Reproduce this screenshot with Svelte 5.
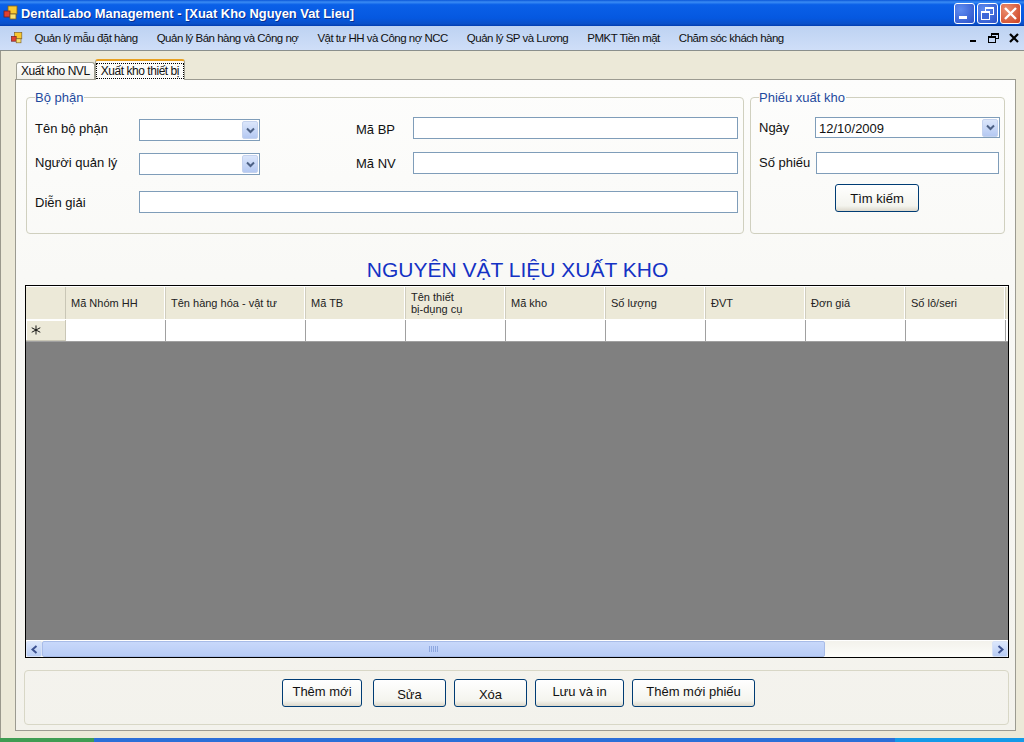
<script>
  const menus = [
    'Quản lý mẫu đặt hàng',
    'Quản lý Bán hàng và Công nợ',
    'Vật tư HH và Công nợ NCC',
    'Quản lý SP và Lương',
    'PMKT Tiền mặt',
    'Chăm sóc khách hàng'
  ];

  const columns = [
    { label: 'Mã Nhóm HH', width: 100 },
    { label: 'Tên hàng hóa - vật tư', width: 140 },
    { label: 'Mã TB', width: 100 },
    { label: 'Tên thiết\nbị-dụng cụ', width: 100 },
    { label: 'Mã kho', width: 100 },
    { label: 'Số lượng', width: 100 },
    { label: 'ĐVT', width: 100 },
    { label: 'Đơn giá', width: 100 },
    { label: 'Số lô/seri', width: 100 }
  ];

  const buttons = [
    { label: 'Thêm mới', width: 80, cls: 'up' },
    { label: 'Sửa', width: 73, cls: 'down' },
    { label: 'Xóa', width: 73, cls: 'down' },
    { label: 'Lưu và in', width: 89, cls: 'up' },
    { label: 'Thêm mới phiếu', width: 123, cls: 'up' }
  ];
</script>

{#snippet arrow()}
  <span class="drop">
    <svg width="9" height="7" viewBox="0 0 9 7"><path d="M1 1.5 L4.5 5 L8 1.5" fill="none" stroke="#4d6185" stroke-width="2"/></svg>
  </span>
{/snippet}

{#snippet logo()}
  <svg width="16" height="16" viewBox="0 0 16 16">
    <rect x="5" y="1" width="9" height="8" fill="#f8c830" stroke="#806020" stroke-width="0.8"/>
    <rect x="1" y="6" width="6" height="6" fill="#e04030" stroke="#702020" stroke-width="0.8"/>
    <rect x="7" y="9" width="6" height="5" fill="#f8e070" stroke="#806020" stroke-width="0.8"/>
  </svg>
{/snippet}

<div class="window">
  <header class="titlebar">
    <span class="app-icon">{@render logo()}</span>
    <span class="title">DentalLabo Management - [Xuat Kho Nguyen Vat Lieu]</span>
    <div class="caption">
      <span class="cap blue">
        <svg width="21" height="21" viewBox="0 0 21 21"><rect x="5" y="13" width="8" height="3" fill="#fff"/></svg>
      </span>
      <span class="cap blue">
        <svg width="21" height="21" viewBox="0 0 21 21" fill="none" stroke="#fff"><rect x="8.5" y="4.5" width="8" height="7" stroke-width="1"/><path d="M8 5h9" stroke-width="2"/><rect x="4.5" y="8.5" width="8" height="8" fill="#3f68d8" stroke-width="1"/><path d="M4 9h9" stroke-width="2"/></svg>
      </span>
      <span class="cap red">
        <svg width="21" height="21" viewBox="0 0 21 21"><path d="M5 5 L16 16 M16 5 L5 16" stroke="#fff" stroke-width="2.4"/></svg>
      </span>
    </div>
  </header>

  <nav class="menubar">
    <span class="menu-icon">{@render logo()}</span>
    {#each menus as m}
      <span class="menu-item">{m}</span>
    {/each}
    <div class="mdi">
      <svg width="12" height="12" viewBox="0 0 12 12"><rect x="2" y="8" width="6" height="2" fill="#000"/></svg>
      <svg width="12" height="12" viewBox="0 0 12 12" fill="none" stroke="#000"><rect x="3.5" y="1.5" width="7" height="5"/><path d="M3 2h8" stroke-width="2"/><rect x="0.5" y="4.5" width="7" height="6" fill="#c6d8f6"/><path d="M0 5h8" stroke-width="2"/></svg>
      <svg width="12" height="12" viewBox="0 0 12 12"><path d="M2 2 L10 10 M10 2 L2 10" stroke="#000" stroke-width="2.2"/></svg>
    </div>
  </nav>

  <main class="client">
    <div class="tabs">
      <span class="tab">Xuất kho NVL</span>
      <span class="tab active"><span class="focus">Xuất kho thiết bị</span></span>
    </div>

    <section class="page">
      <div class="top-groups">
        <fieldset class="group dept">
          <legend>Bộ phận</legend>
          <div class="row first">
            <span class="lbl">Tên bộ phận</span>
            <div class="combo small">{@render arrow()}</div>
            <span class="lbl code">Mã BP</span>
            <div class="input wide raised"></div>
          </div>
          <div class="row second">
            <span class="lbl">Người quản lý</span>
            <div class="combo small">{@render arrow()}</div>
            <span class="lbl code">Mã NV</span>
            <div class="input wide nudged"></div>
          </div>
          <div class="row third">
            <span class="lbl level">Diễn giải</span>
            <div class="input full"></div>
          </div>
        </fieldset>

        <fieldset class="group ticket">
          <legend>Phiếu xuất kho</legend>
          <div class="row ticket-first">
            <span class="lbl short level">Ngày</span>
            <div class="combo date"><span>12/10/2009</span>{@render arrow()}</div>
          </div>
          <div class="row ticket-second">
            <span class="lbl short nudge">Số phiếu</span>
            <div class="input ticket-no"></div>
          </div>
          <div class="search-row">
            <button class="btn search">Tìm kiếm</button>
          </div>
        </fieldset>
      </div>

      <h1 class="heading">NGUYÊN VẬT LIỆU XUẤT KHO</h1>

      <div class="grid">
        <div class="grid-head">
          <div class="corner"></div>
          {#each columns as c}
            <div class="col-head" style="width: {c.width}px">{c.label}</div>
          {/each}
        </div>
        <div class="grid-row">
          <div class="row-head">
            <svg width="10" height="10" viewBox="0 0 11 11"><path d="M5.5 0.5v10M0.8 3l9.4 5M0.8 8l9.4-5" stroke="#000" stroke-width="1"/></svg>
          </div>
          {#each columns as c}
            <div class="cell" style="width: {c.width}px"></div>
          {/each}
        </div>
        <div class="grid-empty"></div>
        <div class="scrollbar">
          <span class="sb-btn">
            <svg width="9" height="9" viewBox="0 0 9 9"><path d="M6.5 1 L2.5 4.5 L6.5 8" fill="none" stroke="#3d5290" stroke-width="2"/></svg>
          </span>
          <div class="sb-thumb">
            <svg width="9" height="6" viewBox="0 0 9 6"><path d="M0.5 0v6M2.5 0v6M4.5 0v6M6.5 0v6M8.5 0v6" stroke="#8ea8e0" stroke-width="1"/></svg>
          </div>
          <div class="sb-track"></div>
          <span class="sb-btn">
            <svg width="9" height="9" viewBox="0 0 9 9"><path d="M2.5 1 L6.5 4.5 L2.5 8" fill="none" stroke="#3d5290" stroke-width="2"/></svg>
          </span>
        </div>
      </div>

      <div class="actions">
        {#each buttons as b}
          <button class="btn {b.cls}" style="width: {b.width}px">{b.label}</button>
        {/each}
      </div>
    </section>
  </main>

  <footer class="taskbar">
    <span class="start"></span>
    <span class="bar"></span>
    <span class="tray"></span>
  </footer>
</div>

<style>
  :global(body) {
    margin: 0;
    background: #ece9d8;
  }

  .window {
    width: 1024px;
    height: 742px;
    display: flex;
    flex-direction: column;
    overflow: hidden;
    font-family: "Liberation Sans", Arial, sans-serif;
    font-size: 13px;
    color: #111;
  }

  .titlebar {
    height: 26px;
    flex: none;
    display: flex;
    align-items: center;
    padding: 0 3px;
    box-sizing: border-box;
    background: linear-gradient(180deg, #0a56d8 0%, #3a8cf4 8%, #0a60e8 18%, #0558e0 70%, #0a50c8 92%, #003cb0 100%);
  }

  .app-icon {
    display: flex;
    width: 18px;
  }

  .title {
    color: #fff;
    font-weight: bold;
    font-size: 12.9px;
    text-shadow: 1px 1px 0 #0a3090;
  }

  .caption {
    margin-left: auto;
    display: flex;
    gap: 2px;
  }

  .cap {
    width: 21px;
    height: 21px;
    box-sizing: border-box;
    border: 1px solid #fff;
    border-radius: 3px;
    display: block;
    overflow: hidden;
  }

  .cap svg {
    display: block;
    margin: -1px;
  }

  .cap.blue {
    background: radial-gradient(circle at 30% 30%, #5f8cf0, #2a50c8);
  }

  .cap.red {
    background: radial-gradient(circle at 30% 30%, #ec9070, #cc4020);
  }

  .menubar {
    height: 25px;
    flex: none;
    display: flex;
    align-items: center;
    padding: 0 3px 0 9px;
    box-sizing: border-box;
    background: linear-gradient(180deg, #bdd2f2, #cfdef8);
    border-bottom: 1px solid #8a8f8c;
    font-size: 11.5px;
    letter-spacing: -0.5px;
  }

  .menu-icon {
    display: flex;
    width: 16px;
    transform: scale(0.8);
  }

  .menu-item {
    padding: 0 9.5px;
    white-space: nowrap;
  }

  .mdi {
    margin-left: auto;
    display: flex;
    gap: 8px;
    padding-right: 1px;
  }

  .client {
    flex: 1;
    min-height: 0;
    display: flex;
    flex-direction: column;
    padding: 9px 8px 7px 15px;
    background: #ece9d8;
    box-shadow: inset 2px 0 0 -1px #9a988c;
  }

  .tabs {
    display: flex;
    height: 19px;
    flex: none;
    align-items: flex-end;
    padding-left: 1px;
    font-size: 12px;
    letter-spacing: -0.45px;
  }

  .tab {
    height: 17px;
    box-sizing: border-box;
    padding: 1px 4px 0 4px;
    background: linear-gradient(180deg, #fff, #f2f1ea);
    border: 1px solid #a0a094;
    border-bottom: none;
    border-radius: 3px 3px 0 0;
    white-space: nowrap;
  }

  .tab.active {
    height: 21px;
    position: relative;
    padding: 3px 1px 0 1px;
    background: #fcfcfa;
    border-top: 2px solid #e8a020;
    z-index: 1;
    margin-bottom: -1px;
  }

  .focus {
    display: block;
    outline: 1px dotted #000;
    padding: 0 4px;
    line-height: 14px;
  }

  .page {
    flex: 1;
    min-height: 0;
    display: flex;
    flex-direction: column;
    box-sizing: border-box;
    padding: 10px 6px 5px 10px;
    border: 1px solid #9c9b91;
    background: linear-gradient(180deg, #fdfdfc 0%, #f9f9f6 30%, #f3f2ec 100%);
  }

  .top-groups {
    display: flex;
    gap: 6px;
    height: 148px;
    flex: none;
  }

  .group {
    margin: 0;
    padding: 0 0 0 8px;
    border: 1px solid #d0d0bf;
    border-radius: 4px;
    box-sizing: border-box;
    height: 144px;
    min-width: 0;
  }

  .group legend {
    color: #1f4a9e;
    font-size: 13px;
    padding: 0 1px 0 0;
    line-height: 15px;
  }

  .dept {
    width: 718px;
  }

  .ticket {
    width: 255px;
  }

  .row {
    display: flex;
    align-items: center;
  }

  .row.first {
    margin-top: 14px;
  }

  .row.second {
    margin-top: 12px;
  }

  .row.third {
    margin-top: 16px;
  }

  .row.ticket-first {
    margin-top: 12px;
  }

  .row.ticket-second {
    margin-top: 14px;
  }

  .lbl {
    width: 104px;
    flex: none;
    position: relative;
    top: -2px;
  }

  .lbl.level {
    top: 0;
  }

  .lbl.nudge {
    top: -1px;
  }

  .lbl.code {
    width: 57px;
    margin-left: 96px;
    top: -1px;
  }

  .lbl.short {
    width: 57px;
  }

  .combo,
  .input {
    box-sizing: border-box;
    height: 22px;
    background: #fff;
    border: 1px solid #7f9db9;
    flex: none;
  }

  .combo {
    display: flex;
    align-items: center;
    justify-content: flex-end;
    padding-right: 1px;
  }

  .combo.small {
    width: 121px;
  }

  .combo.date {
    width: 185px;
    height: 21px;
    margin-left: -1px;
    justify-content: space-between;
    padding-left: 3px;
  }

  .combo.date span:first-child {
    padding-top: 1px;
  }

  .drop {
    width: 16px;
    height: 18px;
    border-radius: 2px;
    background: linear-gradient(180deg, #dbe6fb, #b5c9f2);
    border: 1px solid #c4d2ee;
    box-sizing: border-box;
    display: flex;
    align-items: center;
    justify-content: center;
  }

  .input.wide {
    width: 325px;
  }

  .input.raised {
    margin-top: -4px;
  }

  .input.nudged {
    margin-top: -2px;
  }

  .input.full {
    width: 599px;
  }

  .input.ticket-no {
    width: 183px;
  }

  .search-row {
    display: flex;
    margin-top: 10px;
    padding-left: 76px;
  }

  .btn {
    height: 28px;
    box-sizing: border-box;
    font: inherit;
    color: #111;
    border: 1px solid #003c74;
    border-radius: 3px;
    background: linear-gradient(180deg, #fff 0%, #f4f4ee 80%, #dcd8cc 100%);
    padding: 0;
  }

  .btn.search {
    width: 84px;
  }

  .btn.up {
    padding-bottom: 4px;
  }

  .btn.down {
    padding-top: 2px;
  }

  .heading {
    margin: 21px 0 4px;
    height: 22px;
    line-height: 22px;
    text-align: center;
    font-size: 21px;
    font-weight: normal;
    color: #1432c4;
    flex: none;
  }

  .grid {
    width: 984px;
    height: 373px;
    flex: none;
    margin-left: -1px;
    box-sizing: border-box;
    border: 1px solid #000;
    display: flex;
    flex-direction: column;
    background: #808080;
    font-size: 11px;
    overflow: hidden;
  }

  .grid-head {
    height: 33px;
    flex: none;
    display: flex;
    background: #ece9d8;
    border-top: 1px solid #fff;
    box-sizing: border-box;
  }

  .corner,
  .row-head {
    width: 40px;
    flex: none;
    box-sizing: border-box;
    background: #ece9d8;
    border-right: 1px solid #c9c6b6;
  }

  .col-head {
    flex: none;
    box-sizing: border-box;
    display: flex;
    align-items: center;
    padding-left: 5px;
    white-space: pre-line;
    line-height: 12px;
    border-right: 1px solid #d0cdbd;
    box-shadow: inset -1px 0 0 #fff;
    color: #222;
  }

  .grid-row {
    height: 23px;
    flex: none;
    display: flex;
    background: #fff;
    box-sizing: border-box;
    border-bottom: 1px solid #a0a0a0;
    border-top: 1px solid #fff;
  }

  .row-head {
    display: flex;
    align-items: center;
    padding-left: 5px;
    border-bottom: 1px solid #c9c6b6;
    box-shadow: inset 1px 1px 0 #fff;
  }

  .cell {
    flex: none;
    box-sizing: border-box;
    border-right: 1px solid #a0a0a0;
  }

  .grid-empty {
    flex: 1;
    min-height: 0;
  }

  .scrollbar {
    height: 17px;
    flex: none;
    display: flex;
    align-items: stretch;
    background: linear-gradient(180deg, #f3f2ec, #fdfdfa);
    border-top: 1px solid #fff;
    box-sizing: border-box;
  }

  .sb-btn {
    width: 16px;
    flex: none;
    display: flex;
    align-items: center;
    justify-content: center;
    background: linear-gradient(180deg, #dce7fc, #b8ccf4);
    border: 1px solid #d8e2f6;
    border-radius: 2px;
    box-sizing: border-box;
  }

  .sb-thumb {
    width: 783px;
    flex: none;
    display: flex;
    align-items: center;
    justify-content: center;
    box-sizing: border-box;
    background: linear-gradient(180deg, #c8d8fa, #b8ccf6);
    border: 1px solid #a8bce8;
    border-radius: 2px;
  }

  .sb-track {
    flex: 1;
  }

  .actions {
    margin-top: 12px;
    margin-left: -2px;
    width: 985px;
    height: 55px;
    flex: none;
    box-sizing: border-box;
    border: 1px solid #d8d7c6;
    border-radius: 4px;
    display: flex;
    align-items: flex-start;
    gap: 8px;
    padding: 8px 0 0 257px;
  }

  .actions .btn:first-child {
    margin-right: 3px;
  }

  .taskbar {
    height: 4px;
    flex: none;
    display: flex;
  }

  .start {
    width: 94px;
    background: #3f9c52;
  }

  .bar {
    width: 801px;
    background: #2a6fd8;
  }

  .tray {
    flex: 1;
    background: #149ae8;
  }
</style>
